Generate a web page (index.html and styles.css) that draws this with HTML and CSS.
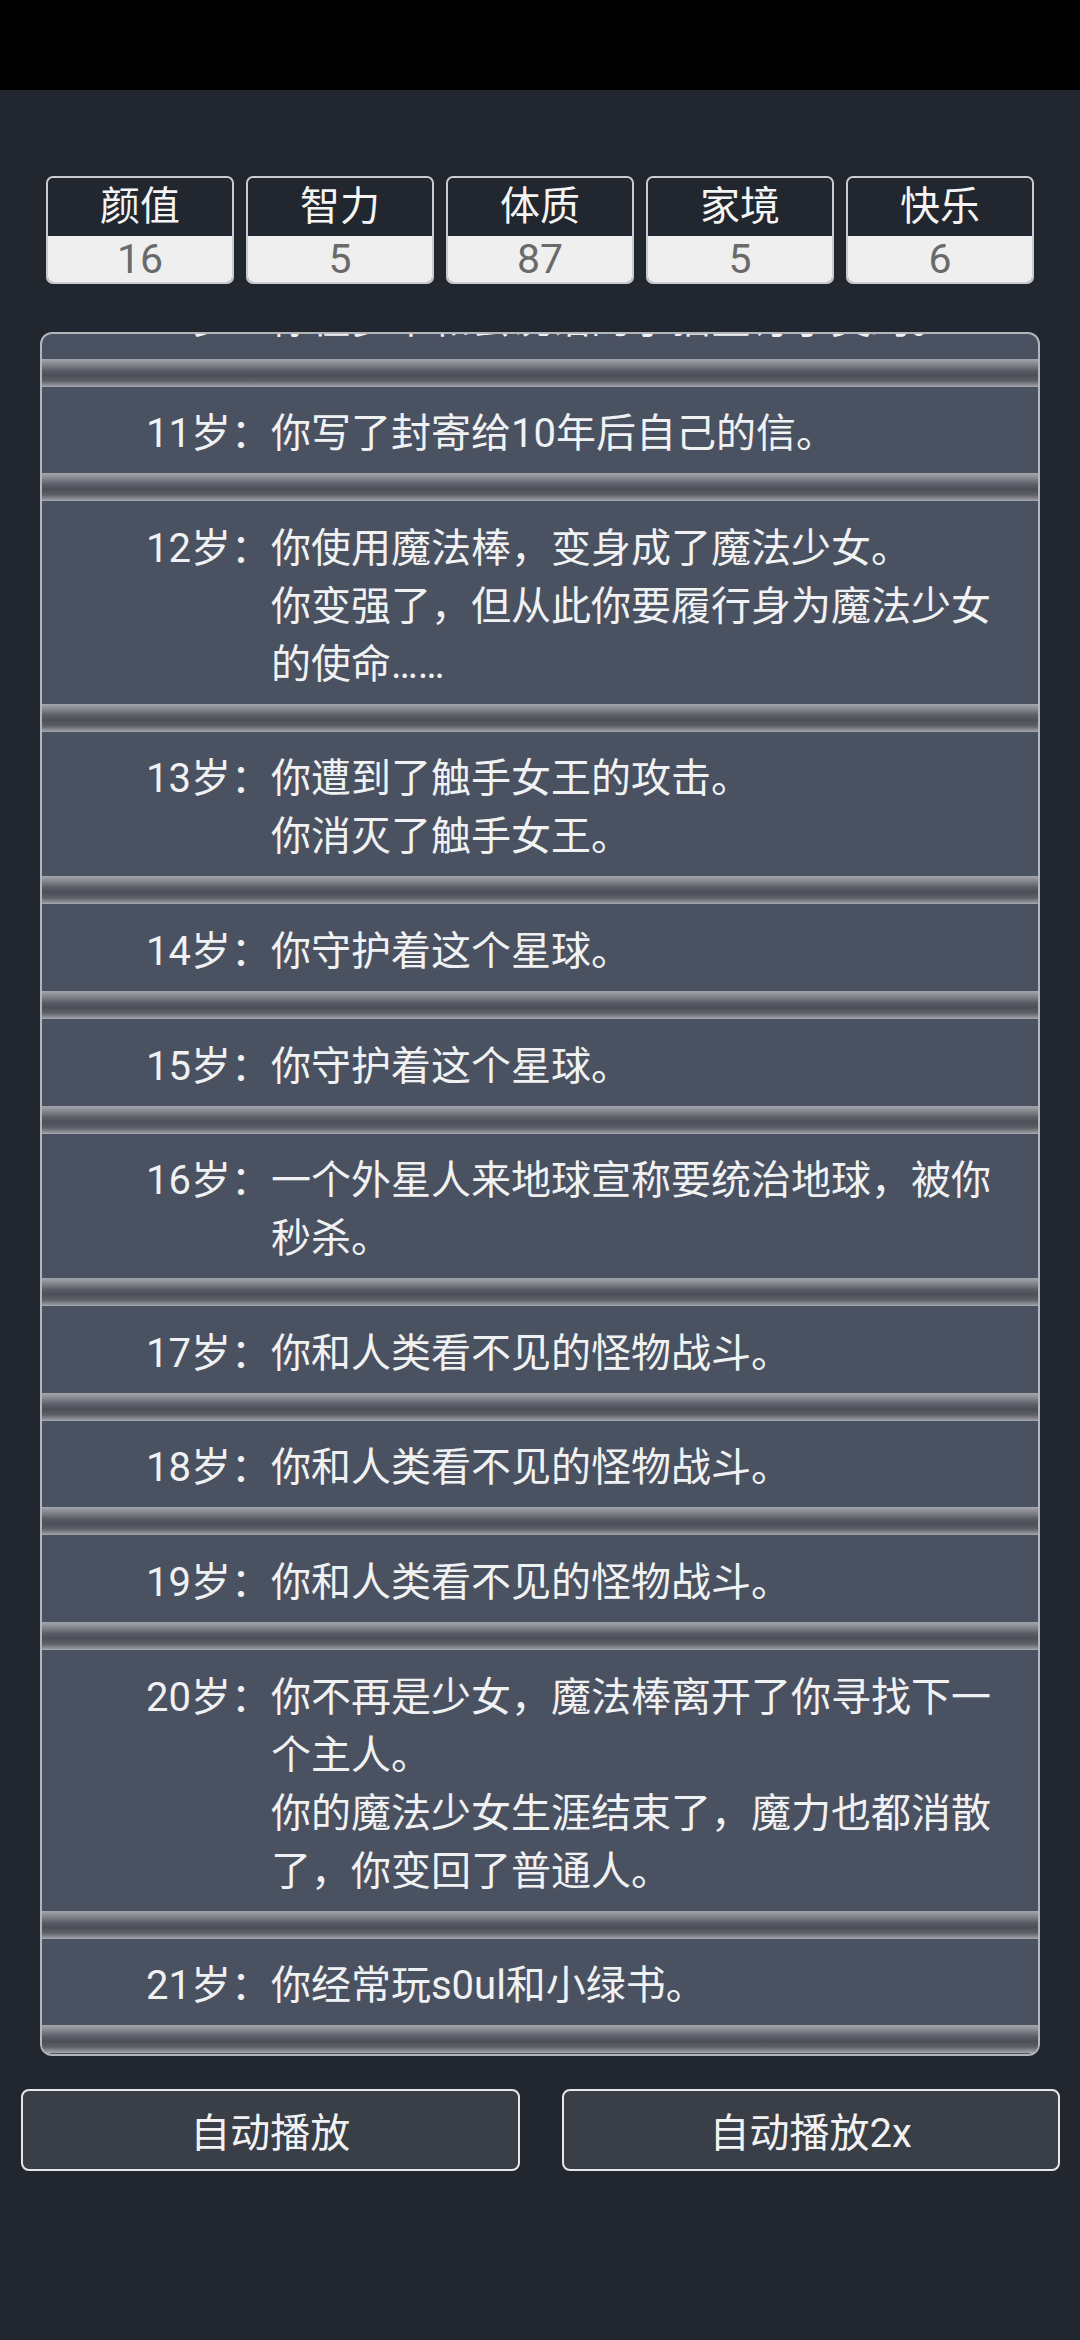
FILE: index.html
```html
<html>
    <head>
        <meta charset="utf-8">
        <link rel="stylesheet" href="styles.css">
    </head>
    <body>
        <div class="statusbar"></div>

        <div class="stats">
            <div class="stat"><div class="stat-name">颜值</div><div class="stat-val">16</div></div>
            <div class="stat"><div class="stat-name">智力</div><div class="stat-val">5</div></div>
            <div class="stat"><div class="stat-name">体质</div><div class="stat-val">87</div></div>
            <div class="stat"><div class="stat-name">家境</div><div class="stat-val">5</div></div>
            <div class="stat"><div class="stat-name">快乐</div><div class="stat-val">6</div></div>
        </div>

        <div class="panel">
            <ul class="log">
                <li class="row"><span class="age">10岁：</span><div class="text"><p>你在梦中和会说话的小猫签订了契约。</p></div></li>
                <li class="row"><span class="age">11岁：</span><div class="text"><p>你写了封寄给10年后自己的信。</p></div></li>
                <li class="row"><span class="age">12岁：</span><div class="text"><p>你使用魔法棒，变身成了魔法少女。</p><p>你变强了，但从此你要履行身为魔法少女的使命……</p></div></li>
                <li class="row"><span class="age">13岁：</span><div class="text"><p>你遭到了触手女王的攻击。</p><p>你消灭了触手女王。</p></div></li>
                <li class="row"><span class="age">14岁：</span><div class="text"><p>你守护着这个星球。</p></div></li>
                <li class="row"><span class="age">15岁：</span><div class="text"><p>你守护着这个星球。</p></div></li>
                <li class="row"><span class="age">16岁：</span><div class="text"><p>一个外星人来地球宣称要统治地球，被你秒杀。</p></div></li>
                <li class="row"><span class="age">17岁：</span><div class="text"><p>你和人类看不见的怪物战斗。</p></div></li>
                <li class="row"><span class="age">18岁：</span><div class="text"><p>你和人类看不见的怪物战斗。</p></div></li>
                <li class="row"><span class="age">19岁：</span><div class="text"><p>你和人类看不见的怪物战斗。</p></div></li>
                <li class="row"><span class="age">20岁：</span><div class="text"><p>你不再是少女，魔法棒离开了你寻找下一个主人。</p><p>你的魔法少女生涯结束了，魔力也都消散了，你变回了普通人。</p></div></li>
                <li class="row"><span class="age">21岁：</span><div class="text"><p>你经常玩s0ul和小绿书。</p></div></li>
            </ul>
        </div>

        <div class="actions">
            <button class="btn">自动播放</button>
            <button class="btn">自动播放2x</button>
        </div>
    </body>
</html>
```

FILE: styles.css
```css
*{
    box-sizing: border-box;
}
body{
    margin: 0;
    width: 1080px;
    height: 2340px;
    background-color: #22262e;
    font-family: Roboto, "Noto Sans CJK SC", sans-serif;
    color: #f0f1f3;
    overflow: hidden;
}
.statusbar{
    height: 90px;
    background-color: #000;
}

/* attribute boxes */
.stats{
    display: grid;
    grid-template-columns: repeat(5, 1fr);
    gap: 12px;
    margin: 86px 46px 0 46px;
}
.stat{
    border: 2px solid #c9cbce;
    border-radius: 7px;
    overflow: hidden;
    text-align: center;
}
.stat-name{
    height: 58px;
    line-height: 58px;
    font-size: 40px;
    color: #f4f4f4;
}
.stat-val{
    height: 46px;
    line-height: 46px;
    font-size: 41px;
    background-color: #efefef;
    color: #6a6a6a;
}

/* life log */
.panel{
    width: 1000px;
    height: 1724px;
    margin: 48px 0 0 40px;
    border: 2px solid #b2b5ba;
    border-radius: 12px;
    background-color: #4a5261;
    overflow: hidden;
}
.log{
    list-style: none;
    margin: -62px 0 0 0;
    padding: 0;
}
.row{
    display: flex;
    padding: 18.6px 0 10px 104px;
    font-size: 40px;
    line-height: 58px;
    position: relative;
    margin-bottom: 28px;
}
.row::after{
    content: "";
    position: absolute;
    left: 0;
    right: 0;
    bottom: -28px;
    height: 28px;
    background: linear-gradient(#a3a6ac 0%, #85888f 18%, #5c5f67 40%, #4c4f57 58%, #5d6068 78%, #8f9298 94%, #a9abb0 100%);
}
.age{
    flex: none;
}
.text{
    width: 740px;
}
.text p{
    margin: 0;
}

/* buttons */
.actions{
    display: grid;
    grid-template-columns: 1fr 1fr;
    gap: 42px;
    margin: 33px 20px 0 21px;
}
.btn{
    height: 82px;
    border: 2px solid #e6e7ea;
    border-radius: 8px;
    background-color: #3a3e47;
    color: #f2f2f4;
    font-family: Roboto, "Noto Sans CJK SC", sans-serif;
    font-size: 40px;
}
```
